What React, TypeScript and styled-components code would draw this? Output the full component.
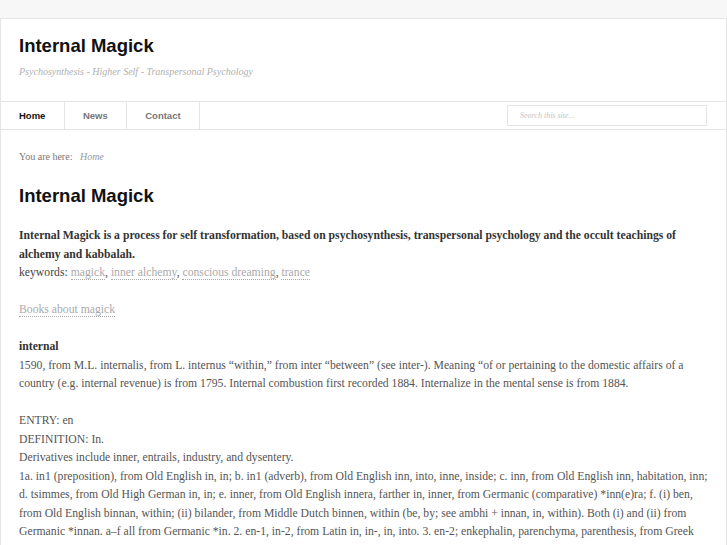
import styled, { createGlobalStyle } from 'styled-components';

const GlobalStyle = createGlobalStyle`
    html, body {
        margin: 0;
        padding: 0;
        background: #f7f7f7;
    }
`;

const Page = styled.div`
    margin-top: 18px;
    background: #ffffff;
    border: 1px solid #e5e5e5;
    border-bottom: none;
    min-height: 600px;
`;

const Header = styled.header`
    padding: 16px 18px 22px;
`;

const SiteTitle = styled.h1`
    margin: 0;
    font-family: 'Liberation Sans', Arial, sans-serif;
    font-size: 18.5px;
    line-height: 22px;
    font-weight: bold;
    color: #111;
`;

const Tagline = styled.p`
    margin: 8px 0 0;
    font-family: 'Liberation Serif', 'Times New Roman', serif;
    font-style: italic;
    font-size: 10px;
    line-height: 14px;
    color: #b0b0b0;
`;

const NavBar = styled.nav`
    display: flex;
    align-items: center;
    justify-content: space-between;
    border-top: 1px solid #e5e5e5;
    border-bottom: 1px solid #e5e5e5;
    height: 27px;
    padding-right: 19px;
`;

const NavList = styled.ul`
    display: flex;
    margin: 0;
    padding: 0;
    list-style: none;
    height: 100%;
`;

const NavItem = styled.li<{ $active?: boolean }>`
    padding: 0 18.5px 0 18px;
    border-right: 1px solid #e5e5e5;
    font-family: 'Liberation Sans', Arial, sans-serif;
    font-size: 9.5px;
    font-weight: bold;
    line-height: 27px;
    color: ${({ $active }) => ($active ? '#111' : '#777')};
`;

const SearchBox = styled.input`
    box-sizing: border-box;
    width: 200px;
    height: 21px;
    border: 1px solid #e5e5e5;
    padding: 0 12px;
    font-family: 'Liberation Serif', serif;
    font-style: italic;
    font-size: 8px;
    outline: none;
    &::placeholder {
        color: #c4c4c4;
    }
`;

const Content = styled.main`
    padding: 20px 18px 0;
    font-family: 'Liberation Serif', 'Times New Roman', serif;
    font-size: 11.7px;
    line-height: 18.5px;
    color: #555;
`;

const Breadcrumb = styled.div`
    font-size: 10px;
    line-height: 14px;
    color: #777;
`;

const CrumbLink = styled.span`
    margin-left: 5px;
    font-style: italic;
    color: #999;
`;

const PageTitle = styled.h2`
    margin: 21px 0 20px;
    font-family: 'Liberation Sans', Arial, sans-serif;
    font-size: 18.5px;
    line-height: 22px;
    font-weight: bold;
    color: #111;
`;

const Paragraph = styled.p`
    margin: 0 0 18.5px;
`;

const Lead = styled.strong`
    color: #333;
`;

const Label = styled.span`
    color: #444;
`;

const DottedLink = styled.a`
    color: #aaa;
    text-decoration: none;
    border-bottom: 1px dotted #aaa;
`;

const Term = styled.strong`
    color: #333;
`;

const keywords = ['magick', 'inner alchemy', 'conscious dreaming', 'trance'];

const App = () => (
    <>
        <GlobalStyle />
        <Page>
            <Header>
                <SiteTitle>Internal Magick</SiteTitle>
                <Tagline>Psychosynthesis - Higher Self - Transpersonal Psychology</Tagline>
            </Header>
            <NavBar>
                <NavList>
                    <NavItem $active>Home</NavItem>
                    <NavItem>News</NavItem>
                    <NavItem>Contact</NavItem>
                </NavList>
                <SearchBox placeholder="Search this site..." />
            </NavBar>
            <Content>
                <Breadcrumb>
                    You are here: <CrumbLink>Home</CrumbLink>
                </Breadcrumb>
                <PageTitle>Internal Magick</PageTitle>
                <Paragraph>
                    <Lead>
                        Internal Magick is a process for self transformation, based on psychosynthesis,
                        transpersonal psychology and the occult teachings of alchemy and kabbalah.
                    </Lead>
                    <br />
                    <Label>keywords: </Label>
                    {keywords.map((word, i) => (
                        <span key={word}>
                            <DottedLink href="#">{word}</DottedLink>
                            {i < keywords.length - 1 ? ', ' : ''}
                        </span>
                    ))}
                </Paragraph>
                <Paragraph>
                    <DottedLink href="#">Books about magick</DottedLink>
                </Paragraph>
                <Paragraph>
                    <Term>internal</Term>
                    <br />
                    1590, from M.L. internalis, from L. internus “within,” from inter “between” (see
                    inter-). Meaning “of or pertaining to the domestic affairs of a country (e.g.
                    internal revenue) is from 1795. Internal combustion first recorded 1884. Internalize
                    in the mental sense is from 1884.
                    <br />
                    <br />
                    ENTRY: en
                    <br />
                    DEFINITION: In.
                    <br />
                    Derivatives include inner, entrails, industry, and dysentery.
                    <br />
                    1a. in1 (preposition), from Old English in, in; b. in1 (adverb), from Old English
                    inn, into, inne, inside; c. inn, from Old English inn, habitation, inn; d. tsimmes,
                    from Old High German in, in; e. inner, from Old English innera, farther in, inner,
                    from Germanic (comparative) *inn(e)ra; f. (i) ben, from Old English binnan, within;
                    (ii) bilander, from Middle Dutch binnen, within (be, by; see ambhi + innan, in,
                    within). Both (i) and (ii) from Germanic *innan. a–f all from Germanic *in. 2. en-1,
                    in-2, from Latin in, in-, in, into. 3. en-2; enkephalin, parenchyma, parenthesis,
                    from Greek en, in.
                </Paragraph>
            </Content>
        </Page>
    </>
);

export default App;
